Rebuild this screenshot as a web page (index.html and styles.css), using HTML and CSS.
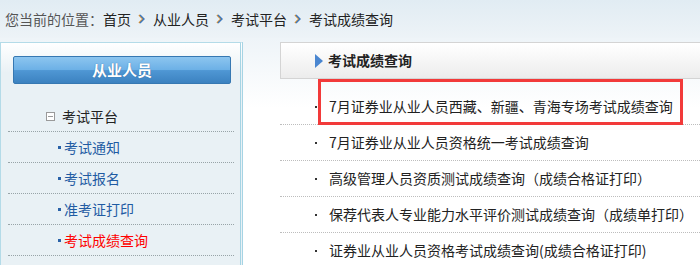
FILE: index.html
```html
<!DOCTYPE html>
<html lang="zh-CN">
<head>
  <meta charset="UTF-8" />
  <title>考试成绩查询</title>
  <link rel="stylesheet" href="styles.css">
</head>
<body>

  <!-- breadcrumb -->
  <div class="crumb">
    <span class="crumb-label">您当前的位置：</span>
    <a href="#">首页</a>
    <svg class="sep" width="7" height="10" viewBox="0 0 7 10"><polyline points="1,1 5,5 1,9" fill="none" stroke="#e0902a" stroke-width="1.6"/><polyline points="2,1 6,5 2,9" fill="none" stroke="#3a78c0" stroke-width="1.4"/></svg>
    <a href="#">从业人员</a>
    <svg class="sep" width="7" height="10" viewBox="0 0 7 10"><polyline points="1,1 5,5 1,9" fill="none" stroke="#e0902a" stroke-width="1.6"/><polyline points="2,1 6,5 2,9" fill="none" stroke="#3a78c0" stroke-width="1.4"/></svg>
    <a href="#">考试平台</a>
    <svg class="sep" width="7" height="10" viewBox="0 0 7 10"><polyline points="1,1 5,5 1,9" fill="none" stroke="#e0902a" stroke-width="1.6"/><polyline points="2,1 6,5 2,9" fill="none" stroke="#3a78c0" stroke-width="1.4"/></svg>
    <a href="#">考试成绩查询</a>
  </div>

  <div class="main">
    <!-- left menu -->
    <div class="side">
      <div class="side-btn">从业人员</div>
      <ul class="tree">
        <li class="tree-head"><span class="fold"></span>考试平台</li>
        <li class="tree-item"><a href="#">考试通知</a></li>
        <li class="tree-item"><a href="#">考试报名</a></li>
        <li class="tree-item"><a href="#">准考证打印</a></li>
        <li class="tree-item active"><a href="#">考试成绩查询</a></li>
        <li class="tree-item"><a href="#">考试成绩复核申请</a></li>
      </ul>
    </div>

    <!-- right content -->
    <div class="content">
      <div class="content-head">
        <span class="tri"></span>考试成绩查询
      </div>
      <ul class="result-list">
        <li class="marked"><a href="#">7月证券业从业人员西藏、新疆、青海专场考试成绩查询</a></li>
        <li><a href="#">7月证券业从业人员资格统一考试成绩查询</a></li>
        <li><a href="#">高级管理人员资质测试成绩查询（成绩合格证打印）</a></li>
        <li><a href="#">保荐代表人专业能力水平评价测试成绩查询（成绩单打印）</a></li>
        <li><a href="#">证券业从业人员资格考试成绩查询(成绩合格证打印)</a></li>
      </ul>
    </div>
  </div>

</body>
</html>
```

FILE: styles.css
```css
body {
  margin: 0;
  font-family: "Noto Sans CJK SC", "Liberation Sans", sans-serif;
  font-size: 14px;
  color: #222;
  background: #fff;
  overflow: hidden;
}

a {
  color: inherit;
  text-decoration: none;
}

ul {
  list-style: none;
  margin: 0;
  padding: 0;
}

/* breadcrumb bar */
.crumb {
  height: 38px;
  line-height: 36px;
  padding-left: 5px;
  background: linear-gradient(#e1ecf3, #edf3f7);
  display: flex;
  align-items: center;
  white-space: nowrap;
}

.crumb-label {
  color: #555;
}

.crumb .sep {
  margin: 0 8px 0 7px;
}

.main {
  display: flex;
  align-items: flex-start;
  padding-top: 4px;
  background: linear-gradient(#eef4f8, #ffffff 70px);
}

/* left menu */
.side {
  width: 239px;
  height: 260px;
  flex-shrink: 0;
  border: 1px solid #b4dbe8;
  border-right: 3px double #a6d4e4;
  background: linear-gradient(#ffffff, #e9f1f5 30px);
}

.side-btn {
  margin: 13px 9px 0 12px;
  height: 26px;
  line-height: 26px;
  border: 1px solid #3678b2;
  border-radius: 2px;
  background: linear-gradient(#8cc5ef, #6cb0e6 50%, #4f97d4 52%, #3c82c0);
  color: #fff;
  font-size: 15px;
  font-weight: bold;
  text-align: center;
  text-shadow: 0 0 1px #2a5f94;
}

.tree {
  margin: 17px 6px 0 7px;
}

.tree li {
  height: 30px;
  line-height: 30px;
  border-bottom: 1px dotted #98a4a8;
  white-space: nowrap;
}

.tree-head {
  padding-left: 38px;
  display: flex;
  align-items: center;
}

.fold {
  width: 7px;
  height: 7px;
  border: 1px solid #9a9a9a;
  margin-right: 7px;
  background: linear-gradient(#9a9a9a, #9a9a9a) center / 5px 1px no-repeat, #fff;
}

.tree-item {
  padding-left: 50px;
  color: #1f5ba3;
  display: flex;
  align-items: center;
}

.tree-item::before {
  content: "";
  width: 3px;
  height: 3px;
  background: #2a62a8;
  margin-right: 3px;
}

.tree-item.active {
  color: #ff0000;
}

/* right content */
.content {
  flex: 1;
  margin-left: 37px;
  min-width: 0;
}

.content-head {
  height: 35px;
  line-height: 35px;
  border: 1px solid #d4d4d4;
  border-right: none;
  background: linear-gradient(#ffffff, #f7f7f7 45%, #ececec);
  padding-left: 34px;
  font-weight: bold;
  display: flex;
  align-items: center;
}

.tri {
  width: 0;
  height: 0;
  border-top: 7px solid transparent;
  border-bottom: 7px solid transparent;
  border-left: 8px solid #4a86d0;
  margin-right: 5px;
}

.result-list {
  padding-top: 10px;
}

.result-list li {
  position: relative;
  height: 35px;
  line-height: 35px;
  border-bottom: 1px dotted #bdbdbd;
  padding-left: 35px;
  white-space: nowrap;
  display: flex;
  align-items: center;
}

.result-list li::before {
  content: "";
  width: 2px;
  height: 2px;
  background: #333;
  margin-right: 12px;
}

/* highlight box over the first result */
.result-list li.marked::after {
  content: "";
  position: absolute;
  left: 38px;
  top: -10px;
  width: 359px;
  height: 40px;
  border: 3px solid #f23a3a;
}
```
